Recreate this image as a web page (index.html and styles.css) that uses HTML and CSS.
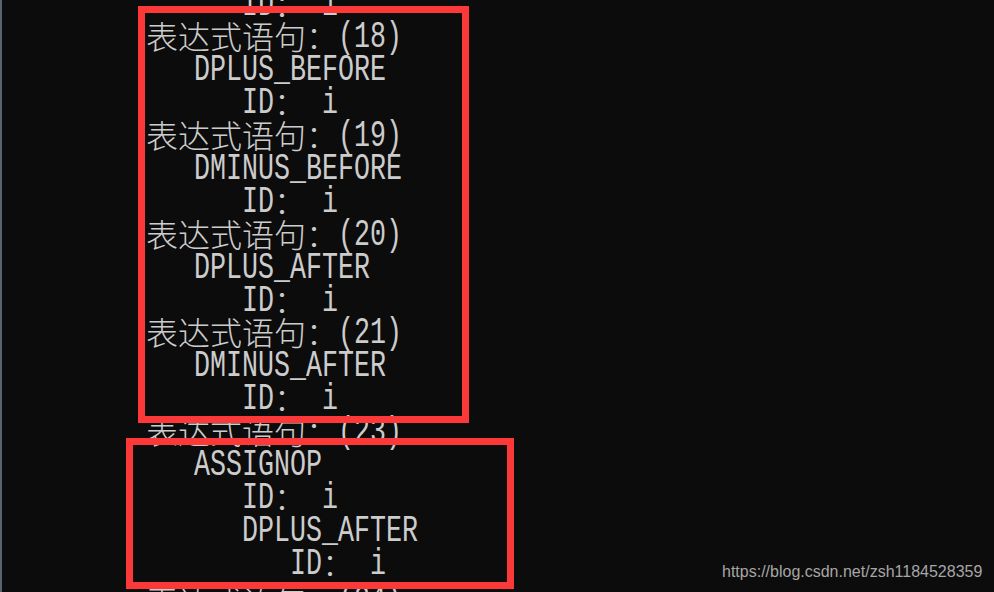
FILE: index.html
```html
<!DOCTYPE html>
<html lang="zh">
<head>
<meta charset="utf-8">
<title>console</title>
<link rel="stylesheet" href="styles.css">
</head>
<body>
<div class="screen">
  <div class="edge"></div>
  <div class="console">
    <div class="ln l2 first"><span class="a">ID</span><span class="cj">：</span><span class="a"> i</span></div>
    <div class="ln l0"><span class="cj">表达式语句：</span><span class="a">(18)</span></div>
    <div class="ln l1"><span class="a">DPLUS_BEFORE</span></div>
    <div class="ln l2"><span class="a">ID</span><span class="cj">：</span><span class="a"> i</span></div>
    <div class="ln l0"><span class="cj">表达式语句：</span><span class="a">(19)</span></div>
    <div class="ln l1"><span class="a">DMINUS_BEFORE</span></div>
    <div class="ln l2"><span class="a">ID</span><span class="cj">：</span><span class="a"> i</span></div>
    <div class="ln l0"><span class="cj">表达式语句：</span><span class="a">(20)</span></div>
    <div class="ln l1"><span class="a">DPLUS_AFTER</span></div>
    <div class="ln l2"><span class="a">ID</span><span class="cj">：</span><span class="a"> i</span></div>
    <div class="ln l0"><span class="cj">表达式语句：</span><span class="a">(21)</span></div>
    <div class="ln l1"><span class="a">DMINUS_AFTER</span></div>
    <div class="ln l2"><span class="a">ID</span><span class="cj">：</span><span class="a"> i</span></div>
    <div class="ln l0"><span class="cj">表达式语句：</span><span class="a">(23)</span></div>
    <div class="ln l1"><span class="a">ASSIGNOP</span></div>
    <div class="ln l2"><span class="a">ID</span><span class="cj">：</span><span class="a"> i</span></div>
    <div class="ln l2"><span class="a">DPLUS_AFTER</span></div>
    <div class="ln l3"><span class="a">ID</span><span class="cj">：</span><span class="a"> i</span></div>
    <div class="ln l0 last"><span class="cj">表达式语句：</span><span class="a">(24)</span></div>
  </div>
  <div class="mark box-a"></div>
  <div class="mark box-b"></div>
  <div class="watermark">https://blog.csdn.net/zsh1184528359</div>
</div>
</body>
</html>
```
FILE: styles.css
```css
html, body {
  margin: 0;
  padding: 0;
  background: #0c0c0c;
}

.screen {
  position: relative;
  width: 994px;
  height: 592px;
  overflow: hidden;
  background: #0c0c0c;
  display: flex;
}

.edge {
  width: 2px;
  flex: none;
  background: #5a646e;
}

.console {
  padding-left: 144px;
  color: #cccccc;
  font-family: "Noto Sans CJK SC", sans-serif;
  font-size: 32px;
}

.ln {
  height: 32.9px;
  line-height: 32.9px;
  white-space: pre;
  display: flex;
  align-items: center;
}

.ln.first {
  margin-top: -13.5px;
}

.ln.last {
  margin-top: 4px;
}

.l0 { padding-left: 0; }
.l1 { padding-left: 48px; }
.l2 { padding-left: 96px; }
.l3 { padding-left: 144px; }

.cj {
  display: inline-block;
  font-family: "Noto Sans CJK SC", sans-serif;
  font-size: 32px;
  line-height: 32.9px;
  font-weight: 300;
}

.a {
  display: inline-block;
  font-family: "Liberation Mono", monospace;
  font-size: 26.667px;
  line-height: 32.9px;
  transform: translateY(2px) scaleY(1.4);
  transform-origin: 50% 50%;
  white-space: pre;
}

.mark {
  position: absolute;
  border: 7px solid #fc3838;
  box-sizing: border-box;
}

.box-a {
  left: 138px;
  top: 6px;
  width: 331px;
  height: 417px;
}

.box-b {
  left: 126px;
  top: 438px;
  width: 388px;
  height: 151px;
}

.watermark {
  position: absolute;
  left: 722px;
  top: 562px;
  font-family: "Liberation Sans", Arial, sans-serif;
  font-size: 16px;
  color: #a6a6a6;
  line-height: 20px;
}
```
